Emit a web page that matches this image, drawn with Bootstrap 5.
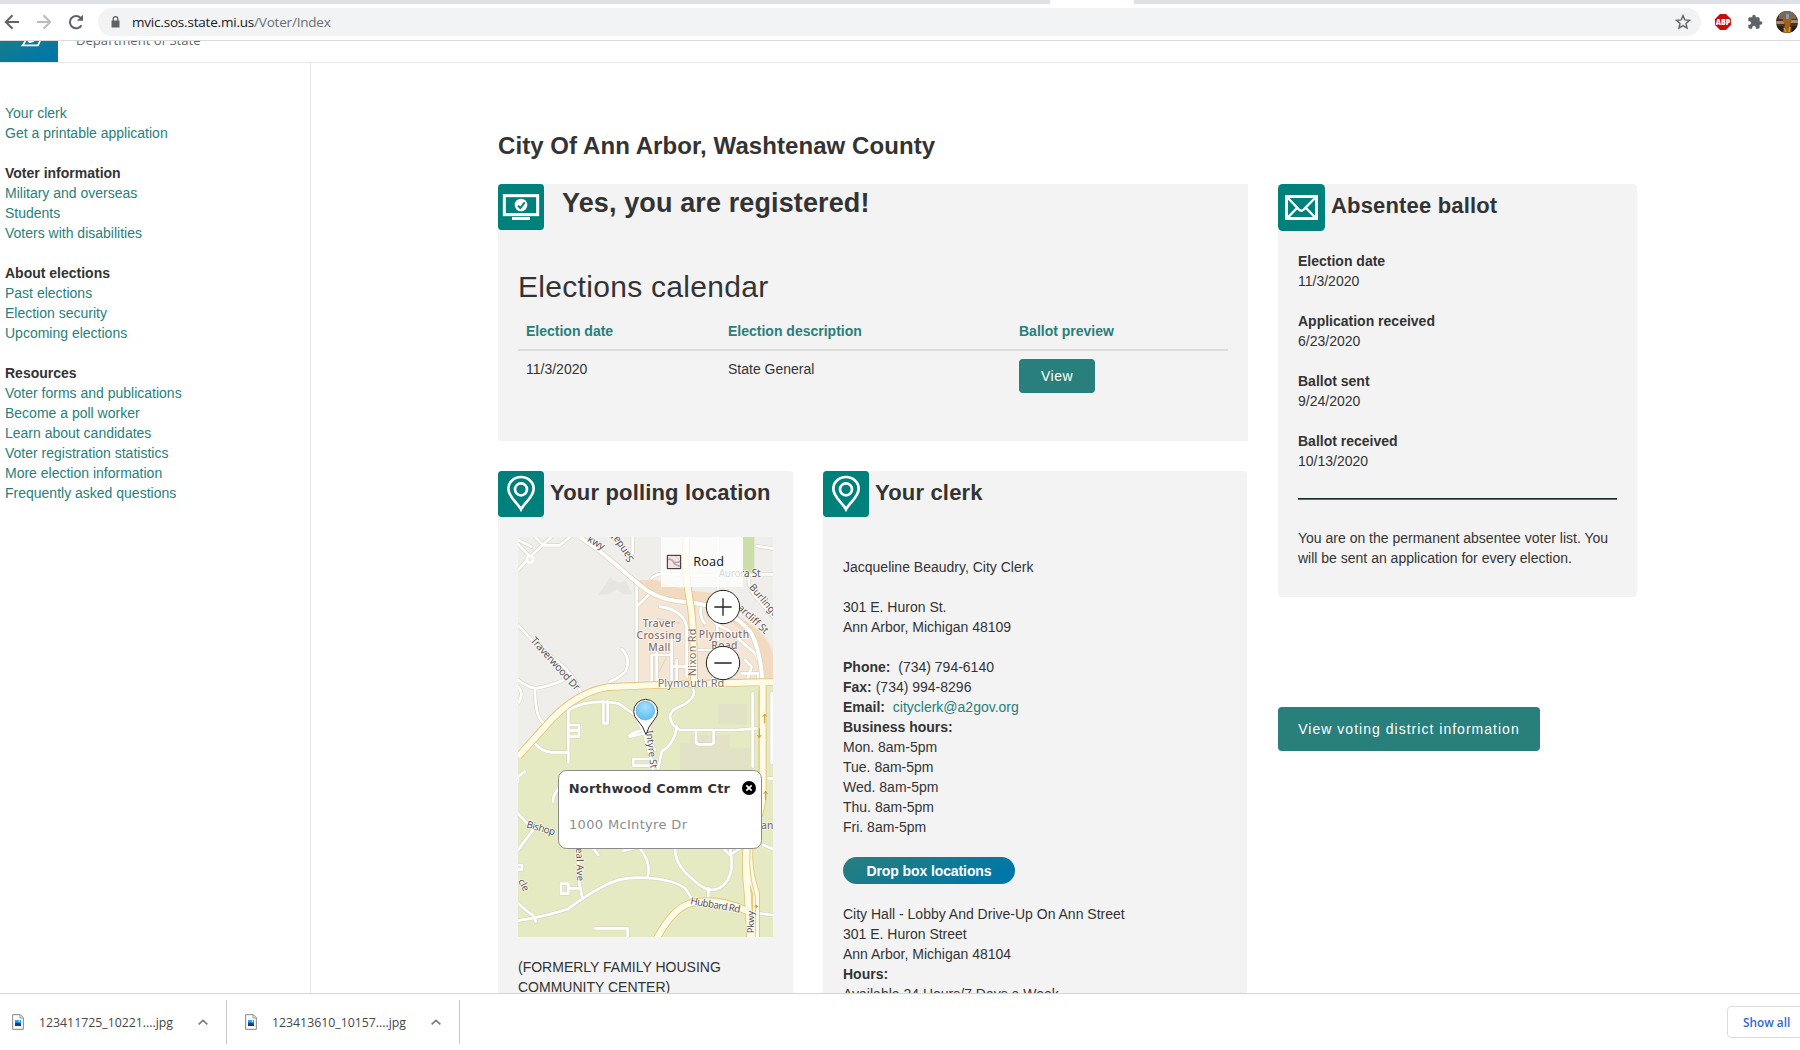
<!DOCTYPE html>
<html lang="en">
<head>
<meta charset="utf-8">
<title>Michigan Voter Information Center</title>
<link href="https://cdn.jsdelivr.net/npm/bootstrap@5.3.0/dist/css/bootstrap.min.css" rel="stylesheet">
<style>
body{height:1050px;overflow:hidden;font:14px/20px "Liberation Sans",Arial,sans-serif;color:#333;background:#fff}
a{color:#277f7b;text-decoration:none}
.tabstrip{height:4px;background:#dee1e6;padding-left:1050px}
.tabstrip span{display:block;width:84px;height:4px;background:#fff}
.toolbar{height:37px;border-bottom:1px solid #d9dadb}
.tool-icons{width:98px;padding-left:4px;gap:16px}
.omnibox{width:1603px;height:28px;border-radius:14px;background:#f1f3f4;padding:0 10px 0 13px}
.url{font:13.5px/20px "Open Sans","Noto Sans",sans-serif;color:#202124;letter-spacing:-.2px;margin-left:12px}
.url span{color:#6b6f73}
.site-head{height:22px;border-bottom:1px solid #e8e8e8;overflow:hidden}
.brand{width:58px;height:21px;background:linear-gradient(155deg,#177d8b,#0077a8 85%)}
.dept{font:13.1px/18px "Open Sans","Noto Sans",sans-serif;color:#5c6770;margin:-10px 0 0 18px}
.page{flex:1 1 0;min-height:0;overflow:hidden}
.side{width:311px;border-right:1px solid #e8e8e8;padding:40px 0 0 5px;flex:none}
.side ul{margin-bottom:20px}
.content{padding:67px 0 0 187px}
.city{font-size:24px;line-height:32px;font-weight:700;letter-spacing:.07px;margin:0 0 22px}
.left-col{width:750px}
.right-col{width:359px}
.panel{background:#f3f3f3;border-radius:4px}
.tile{width:46px;height:46px;flex:none;display:block}
.panel-title{font-size:22px;line-height:26px;font-weight:700;letter-spacing:.17px;margin:9px 0 0 6px}
.reg-panel{height:257px;border-radius:0}
.reg-title{font-size:27px;line-height:30px;font-weight:700;letter-spacing:.12px;margin:4px 0 0 18px}
.cal{padding:40px 20px 0}
.cal h2{font-size:30px;line-height:33px;margin:0 0 10px;letter-spacing:.3px;font-weight:400}
.cal table{--bs-table-bg:transparent;width:710px;table-layout:fixed;color:#333;margin:0}
.cal th{color:#277f7b;padding:8px;border-bottom:2px solid #ddd!important;line-height:20px}
.cal td{padding:8px;border:0;line-height:20px;color:#333}
.btn-teal,.btn-teal:hover{background:#297f7b;color:#fff;border:0;border-radius:4px;letter-spacing:.5px;font-family:inherit}
.btn-view{width:76px;height:34px;font-size:14px;padding:0}
.btn-district{width:262px;height:44px;font-size:14px;padding:0;margin-top:110px;letter-spacing:1.02px}
.poll{width:295px;height:560px}
.clerk{width:424px;height:560px}
.map-box{width:255px;height:400px;margin:20px 0 20px 20px}
.body-text{padding:0 20px}
.drop{width:172px;height:27px;border-radius:14px;background:linear-gradient(155deg,#297f7b,#0077a8 85%);color:#fff;font-weight:700;letter-spacing:-.1px;margin:20px 0}
.ab-rule{height:2px;background:#29807b;border-top:1px solid #12302f;margin:27px 0 28px}
.downloads{height:57px;border-top:1px solid #d4d6d8;font:12.3px/20px "Open Sans","Noto Sans",sans-serif;background:#fff}
.dl-item{height:44px;border-right:1px solid #c8c9cb;padding-left:12px}
.dl-name{width:133px;margin:2px 1px 0 15px;color:#44474a;white-space:nowrap}
.show-all{width:78px;height:32px;border:1px solid #dadce0;border-radius:4px 0 0 4px;color:#3367d6;font:600 11.800px/30px "Open Sans","Noto Sans",sans-serif;padding-left:15px;margin-right:-5px;overflow:hidden;white-space:nowrap}
</style>
<script src="https://cdn.jsdelivr.net/npm/bootstrap@5.3.0/dist/js/bootstrap.bundle.min.js"></script>
</head>
<body class="d-flex flex-column">
<svg width="0" height="0" class="position-absolute">
  <symbol id="pin-tile" viewBox="0 0 138 138"><rect width="138" height="138" rx="11" fill="#00807b"/><path d="M69 115C58 94 31 78 31 53a38 35 0 0 1 76 0C107 78 80 94 69 115z" fill="none" stroke="#fff" stroke-width="8"/><circle cx="69" cy="55" r="18" fill="none" stroke="#fff" stroke-width="8"/></symbol>
  <symbol id="jpg" viewBox="0 0 36 48"><path d="M2 2h23l9 9v35H2z" fill="#fff" stroke="#858585" stroke-width="3"/><path d="M24 2v10h10" fill="none" stroke="#858585" stroke-width="2.5"/><path d="M9 18h18v18H9z" fill="#1d5fae"/><path d="M9 18h18v7l-9 4-9-5z" fill="#2ba3e8"/><path d="M9 29l8-4 10 8v3H9z" fill="#0b3c86"/><circle cx="22" cy="21" r="2" fill="#fff"/></symbol>
  <symbol id="up" viewBox="0 0 30 18"><path d="M2 16L15 4l13 12" fill="none" stroke="#7b7b7b" stroke-width="5"/></symbol>
</svg>

<div class="tabstrip flex-shrink-0"><span></span></div>
<div class="toolbar d-flex align-items-center flex-shrink-0">
  <div class="tool-icons d-flex align-items-center">
    <svg width="16" height="16" viewBox="0 0 16 16" fill="none" stroke="#5f6368" stroke-width="2"><path d="M15 8H2M8.500 1.300L1.800 8l6.700 6.700"/></svg>
    <svg width="16" height="16" viewBox="0 0 16 16" fill="none" stroke="#babcbe" stroke-width="2"><path d="M1 8h13M7.500 1.300L14.200 8l-6.700 6.700"/></svg>
    <svg width="16" height="16" viewBox="0 0 16 16"><path d="M13.500 11.200A6.200 6.200 0 1 1 12.500 3.700" fill="none" stroke="#5f6368" stroke-width="2"/><path d="M15 .8v6H9z" fill="#5f6368"/></svg>
  </div>
  <div class="omnibox d-flex align-items-center">
    <svg width="9" height="12" viewBox="0 0 9 12"><path d="M.5 4.500h8v7h-8z" fill="#5f6368"/><path d="M2.200 5V3a2.300 2.300 0 0 1 4.600 0v2" fill="none" stroke="#5f6368" stroke-width="1.300"/></svg>
    <div class="url">mvic.sos.state.mi.us<span>/Voter/Index</span></div>
    <svg class="ms-auto" width="16" height="16" viewBox="0 0 16 16"><path d="M8 1.600l1.800 4.300 4.700.4-3.500 3.100 1 4.600-4-2.400-4 2.400 1-4.600L1.500 6.300l4.700-.4z" fill="none" stroke="#5f6368" stroke-width="1.400"/></svg>
  </div>
  <svg width="16" height="16" viewBox="0 0 16 16" style="margin-left:14px"><path d="M5 0h6l5 5v6l-5 5H5l-5-5V5z" fill="#c70d0d"/><text x="8" y="11" text-anchor="middle" font-family="Open Sans" font-weight="800" font-size="8" fill="#fff" textLength="14.500" lengthAdjust="spacingAndGlyphs">ABP</text></svg>
  <svg width="16" height="16" viewBox="0 0 24 24" style="margin-left:16px"><path d="M20.500 11H19V7c0-1.100-.9-2-2-2h-4V3.500a2.500 2.500 0 0 0-5 0V5H4c-1.100 0-2 .9-2 2v3.800h1.500a2.700 2.700 0 0 1 0 5.400H2V20c0 1.100.9 2 2 2h3.800v-1.500a2.700 2.700 0 0 1 5.400 0V22H17c1.100 0 2-.9 2-2v-4h1.500a2.500 2.500 0 0 0 0-5z" fill="#5f6368"/></svg>
  <svg width="22" height="22" viewBox="0 0 22 22" style="margin-left:13px"><defs><clipPath id="av"><circle cx="11" cy="11" r="11"/></clipPath></defs><g clip-path="url(#av)"><path d="M0 0h22v22H0z" fill="#4b3220"/><path d="M3 0h17v8H3z" fill="#716a66"/><path d="M0 10h8v3H0zM15 9h7v3h-7z" fill="#a88a68"/><path d="M7 2l2 6h5l2-6 1 1-2 8-1 4 1 7H7l2-8-2-4-1-6z" fill="#a0611b"/><path d="M10 3h3v5h-3z" fill="#8b9ba5"/><path d="M8 17l2 4M14 16l-1 5" stroke="#d9a32a" stroke-width="1.500"/><path d="M0 15h7v7H0zM16 15h6v7h-6z" fill="#2b201a"/></g></svg>
</div>

<header class="site-head d-flex flex-shrink-0">
  <div class="brand"><svg class="d-block" width="58" height="21" viewBox="0 0 58 21"><path d="M25.500 0L22.500 4.300H38l2-4.300M28 0l2 1 4-1" fill="none" stroke="#fff" stroke-width="1.700"/></svg></div>
  <div class="dept">Department of State</div>
</header>

<div class="page d-flex">
  <nav class="side">
    <ul class="list-unstyled">
      <li><a href="#">Your clerk</a></li><li><a href="#">Get a printable application</a></li>
    </ul>
    <ul class="list-unstyled">
      <li><b>Voter information</b></li><li><a href="#">Military and overseas</a></li><li><a href="#">Students</a></li><li><a href="#">Voters with disabilities</a></li>
    </ul>
    <ul class="list-unstyled">
      <li><b>About elections</b></li><li><a href="#">Past elections</a></li><li><a href="#">Election security</a></li><li><a href="#">Upcoming elections</a></li>
    </ul>
    <ul class="list-unstyled">
      <li><b>Resources</b></li><li><a href="#">Voter forms and publications</a></li><li><a href="#">Become a poll worker</a></li><li><a href="#">Learn about candidates</a></li><li><a href="#">Voter registration statistics</a></li><li><a href="#">More election information</a></li><li><a href="#">Frequently asked questions</a></li>
    </ul>
  </nav>

  <main class="content">
    <h1 class="city">City Of Ann Arbor, Washtenaw County</h1>
    <div class="d-flex align-items-start" style="gap:30px">
      <div class="left-col">
        <section class="panel reg-panel">
          <div class="d-flex">
            <svg class="tile" viewBox="0 0 138 138"><rect width="138" height="138" rx="11" fill="#00807b"/><rect x="19" y="35" width="100" height="57" fill="none" stroke="#fff" stroke-width="9"/><path d="M42 99h54v9H42z" fill="#fff"/><circle cx="69" cy="63" r="19" fill="#fff"/><path d="M60 65l7 7 13-17" fill="none" stroke="#00807b" stroke-width="6"/></svg>
            <h2 class="reg-title">Yes, you are registered!</h2>
          </div>
          <div class="cal">
            <h2>Elections calendar</h2>
            <table class="table">
              <colgroup><col style="width:202px"><col style="width:291px"><col></colgroup>
              <thead><tr><th>Election date</th><th>Election description</th><th>Ballot preview</th></tr></thead>
              <tbody><tr><td>11/3/2020</td><td>State General</td><td><button class="btn btn-teal btn-view d-block">View</button></td></tr></tbody>
            </table>
          </div>
        </section>
        <div class="d-flex" style="gap:30px;margin-top:30px">
          <section class="panel poll">
            <div class="d-flex"><svg class="tile"><use href="#pin-tile"/></svg><h3 class="panel-title">Your polling location</h3></div>
            <div class="map-box">
<svg class="d-block" width="255" height="400" viewBox="84 231 765 1200" font-family="Noto Sans,Open Sans,sans-serif">
  <defs>
    <g id="minor" fill="none" stroke-linecap="round" stroke-linejoin="round">
      <path d="M84 252L120 290 84 330M120 290l65-60M135 231l25 25h50l30-25M84 240l40 20"/>
      <path d="M428 231v45q0 12-12 12M484 355q20-20 70-12l60 4 235-4M684 231v110M684 350v40M800 258l49 8M775 350q0 40 30 70l44 50"/>
      <path d="M84 660q35 25 55 25 60-10 100-35M135 688q0 50 10 80l20 30M84 495q50 60 120 110 50 40 70 95"/>
      <path d="M395 567q30 30 10 70-20 18-45 28l-5 20M440 370v305M440 440l45-45M485 585v85M485 585h60M545 540v135M510 440q70 10 80 60v150M500 580v80"/>
      <path d="M610 440v110M635 430q-10 40 10 60M655 460q10 30 60 50l80 70q20 40 25 80M620 570h110v80M680 480l5 60M765 600l20 20-15 45M755 640h50v20M560 600v60M590 620h-40M670 590v70"/>
      <path d="M84 680q20 20 0 50M235 870v-120q60-35 150-20l50 35q30 60 60 105M237 795h30v35h-30M237 812h30M340 725v65h13v-65M610 690q10 20-30 45-60 20-30 60l20 15h170l60-5M560 800q-5 50-45 75l-10 50M618 810v35q0 8 10 8h35q8 0 8-8v-35M480 815l-60 15q-10-10 60-25M788 700v220M465 830q15 60 25 100"/>
      <path d="M135 850q20 25 50 27h50v30M430 897h55v20h-55zM84 965v-15l20-15M84 1060l45 50-45 60M205 985q-20 30-15 40M265 1165v90l12 60M265 1285h-30v-14h-22v30h22v-14M84 1382q80-12 150-35 60-45 110-70 50-30 130-23 75 5 110 30 20 25 25 45"/>
      <path d="M450 1165q35 45 23 85M555 1165q0 50 50 90 60 60 100 15 30-30 15-105M655 1285v35M315 1405h98v30M700 1165l20 20 30-20M820 1155l29 12M805 1360l44 5M835 955h14M84 1215h12v14H84M84 1330l35 30q15 5 18 25M310 1165l15 20M400 1172l35-8M845 700v210"/>
    </g>
    <g id="major" fill="none">
      <path d="M84 890L165 800Q250 700 350 682Q450 675 849 666"/>
      <path d="M590 231q-10 80 10 195 12 60 12 245"/>
      <path d="M818 670v320q0 70-30 110-25 100 10 200v140M803 1050q-50 80-30 250l8 140M500 1435q50-90 100-105 80-20 170 22"/>
    </g>
    <g id="ply" fill="none"><path d="M270 231q60 40 110 85l70 60q60 50 150 50l60 12q70 20 120 75 30 50 38 155"/></g>
  </defs>
  <path d="M84 231h765v1200H84z" fill="#efeeeb"/>
  <path d="M84 890L165 800Q250 700 350 682Q450 675 849 666V1431H84z" fill="#e6eac3"/>
  <path d="M435 360h90l90 35h60l80 80q70 40 94 90v95H435z" fill="#f4e5d5"/>
  <path d="M435 360h60q70 30 170 40l90 75q80 50 94 110v75h-25q-5-110-70-150-80-70-130-75-120-5-189-75z" fill="#f2dac0"/>
  <path d="M758 231h35v110h-35z" fill="#cbdda9"/>
  <path d="M325 405l35-52 25 15 22-5 20 40h-30l-15-15-25 15z" fill="#e7e5e0"/>
  <path d="M684 732h87v60h-87zM570 850h30v-25h120v40h60v75H570z" fill="#e2e2c6"/>
  <path d="M495 600l20-40M505 640l25-50M500 475l70 15M660 610l20 40M640 470v30" stroke="#d9d2c4" stroke-width="3"/>
  <use href="#minor" stroke="#d9d5c2" stroke-width="12"/><use href="#minor" stroke="#fff" stroke-width="8"/>
  <use href="#ply" stroke="#dccfae" stroke-width="16"/><use href="#ply" stroke="#fff" stroke-width="12"/>
  <use href="#major" stroke="#e2c277" stroke-width="23"/><use href="#major" stroke="#fffbe4" stroke-width="18"/>
  <path d="M807 690v290q0 70-30 120M790 1110q-25 100 6 200v120" fill="none" stroke="#e5c983" stroke-width="3"/>
  <circle cx="120" cy="298" r="10" fill="#efeeeb" stroke="#fff" stroke-width="6"/>
  <g fill="none" stroke="#c99a3d" stroke-width="3"><path d="M824 790v-28l-6 8M824 762l6 8M808 805v28l-6-8M808 833l6-8M827 1020v-26l-6 8M827 994l6 8M799 1345v-10l-5 6M799 1335l5 6"/></g>
  <g font-size="31" fill="#575254" stroke="#fff" stroke-width="5" stroke-opacity=".75" paint-order="stroke" stroke-linejoin="round">
    <text transform="translate(290 243) rotate(30)" font-size="30">kwy</text>
    <text transform="translate(432 298) rotate(236)" font-size="30">Sandalw</text>
    <text x="686" y="350" font-size="30" textLength="126">Aurora St</text>
    <text transform="translate(776 382) rotate(50)" font-size="30">Burlingt</text>
    <text transform="translate(742 446) rotate(43)" font-size="30" textLength="112">arcliff St</text>
    <text transform="translate(120 542) rotate(48)" font-size="31" textLength="204">Traverwood Dr</text>
    <g font-size="31" fill="#85706d" text-anchor="middle" font-weight="500"><text x="507" y="501" textLength="97">Traver</text><text x="507" y="537" textLength="135">Crossing</text><text x="508" y="572" textLength="66">Mall</text><text x="702" y="533" textLength="151">Plymouth</text><text x="703" y="568" textLength="78">Road</text></g>
    <text transform="translate(618 649) rotate(-90)" font-size="32" fill="#7b6b62" textLength="143">Nixon Rd</text>
    <text x="503" y="682" font-size="33" fill="#7b7468" textLength="200">Plymouth Rd</text>
    <text transform="translate(468 812) rotate(83)" font-size="29">Intyre St</text>
    <text transform="translate(108 1102) rotate(16)" font-size="30" textLength="88">Bishop</text>
    <text transform="translate(258 1164) rotate(88)" font-size="29" textLength="100">eal Ave</text>
    <text transform="translate(84 1263) rotate(62)" font-size="29">cle</text>
    <text transform="translate(600 1332) rotate(10)" font-size="30" textLength="152">Hubbard Rd</text>
    <text transform="translate(791 1420) rotate(-90)" font-size="28">Pkwy</text>
    <text x="813" y="1107" fill="#85706d" font-size="31" font-weight="500">an</text>
  </g>
  <path d="M513 231h246v150H513z" fill="#fff" fill-opacity=".76"/>
  <path d="M532 286h40v40h-40z" fill="#f2e6dc" stroke="#222" stroke-width="3"/><path d="M534 298q12-2 16 8t20 12M550 306q12 4 20-2" fill="none" stroke="#b39ac9" stroke-width="5"/><path d="M535 290l30 30M556 288l13 14" stroke="#e5b6a0" stroke-width="2"/>
  <text x="610" y="319" font-family="Open Sans,Noto Sans,sans-serif" font-size="38" fill="#111" textLength="92">Road</text>
  <g fill="#fff" stroke="#222" stroke-width="3"><circle cx="699" cy="441" r="50"/><circle cx="699" cy="609" r="50"/></g>
  <path d="M673 441h52M699 415v52M673 609h52" stroke="#222" stroke-width="4"/>
  <defs><radialGradient id="ball" cx=".5" cy=".3" r=".7"><stop offset="0" stop-color="#a6e0fb"/><stop offset=".45" stop-color="#86d1f8"/><stop offset="1" stop-color="#5dbdf0"/></radialGradient></defs>
  <path d="M468 824Q461 800 442 780A36 36 0 1 1 492 780Q474 800 468 824z" fill="#fff" stroke="#333" stroke-width="3"/><circle cx="466" cy="752" r="28" fill="url(#ball)" stroke="#56a9d9" stroke-width="2"/>
  <rect x="205.500" y="931.500" width="609" height="234" rx="24" fill="#fff" stroke="#8a8a8a" stroke-width="3"/>
  <g font-family="DejaVu Sans,sans-serif"><text x="236" y="999" font-size="39" font-weight="700" fill="#333" textLength="484">Northwood Comm Ctr</text><text x="237" y="1107" font-size="39" fill="#8d8d8d" textLength="354">1000 McIntyre Dr</text></g>
  <circle cx="777" cy="984" r="21" fill="#000"/><path d="M769 976l16 16M785 976l-16 16" stroke="#fff" stroke-width="5"/>
</svg>
            </div>
            <div class="body-text">(FORMERLY FAMILY HOUSING COMMUNITY CENTER)</div>
          </section>
          <section class="panel clerk">
            <div class="d-flex"><svg class="tile"><use href="#pin-tile"/></svg><h3 class="panel-title">Your clerk</h3></div>
            <div class="body-text" style="padding-top:40px">
              Jacqueline Beaudry, City Clerk<br><br>
              301 E. Huron St.<br>Ann Arbor, Michigan 48109<br><br>
              <b>Phone:</b>&nbsp; (734) 794-6140<br><b>Fax:</b> (734) 994-8296<br><b>Email:</b>&nbsp; <a href="#">cityclerk@a2gov.org</a><br>
              <b>Business hours:</b><br>Mon. 8am-5pm<br>Tue. 8am-5pm<br>Wed. 8am-5pm<br>Thu. 8am-5pm<br>Fri. 8am-5pm
              <div class="drop d-flex align-items-center justify-content-center">Drop box locations</div>
              City Hall - Lobby And Drive-Up On Ann Street<br>301 E. Huron Street<br>Ann Arbor, Michigan 48104<br><b>Hours:</b><br>Available 24 Hours/7 Days a Week
            </div>
          </section>
        </div>
      </div>
      <div class="right-col">
        <section class="panel" style="height:413px">
          <div class="d-flex"><svg class="tile" style="width:47px;height:47px" viewBox="0 0 141 141"><rect width="141" height="141" rx="14" fill="#00807b"/><rect x="25.500" y="37.500" width="90" height="66" fill="none" stroke="#fff" stroke-width="9"/><path d="M30 42l33 35q7 6 14 0l34-35M30 100l27-28M111 100L84 72" fill="none" stroke="#fff" stroke-width="7"/></svg><h3 class="panel-title">Absentee ballot</h3></div>
          <div class="body-text" style="padding-top:20px">
            <b>Election date</b><br>11/3/2020<br><br><b>Application received</b><br>6/23/2020<br><br><b>Ballot sent</b><br>9/24/2020<br><br><b>Ballot received</b><br>10/13/2020
            <div class="ab-rule"></div>
            You are on the permanent absentee voter list. You will be sent an application for every election.
          </div>
        </section>
        <button class="btn btn-teal btn-district">View voting district information</button>
      </div>
    </div>
  </main>
</div>

<footer class="downloads d-flex align-items-center flex-shrink-0">
  <div class="dl-item d-flex align-items-center" style="width:227px"><svg width="12" height="16"><use href="#jpg"/></svg><span class="dl-name">123411725_10221....jpg</span><svg width="10" height="6" style="margin-left:25px"><use href="#up"/></svg></div>
  <div class="dl-item d-flex align-items-center" style="width:233px;padding-left:18px"><svg width="12" height="16"><use href="#jpg"/></svg><span class="dl-name">123413610_10157....jpg</span><svg width="10" height="6" style="margin-left:25px"><use href="#up"/></svg></div>
  <div class="show-all ms-auto">Show all</div>
</footer>
</body>
</html>
